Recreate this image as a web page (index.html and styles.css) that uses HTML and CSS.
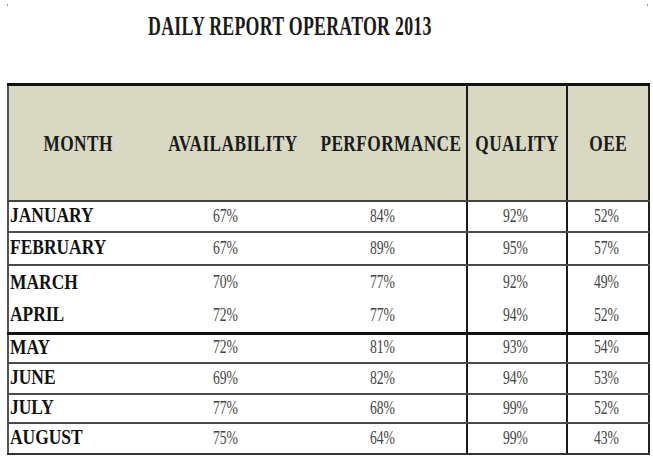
FILE: index.html
```html
<!DOCTYPE html>
<html lang="en">
<head>
<meta charset="utf-8">
<title>Daily Report Operator 2013</title>
<link rel="stylesheet" href="styles.css">
</head>
<body>
<div class="page">
  <div class="specks"><span class="speck"></span><span class="speck"></span></div>
  <h1 class="title"><span class="sq">DAILY REPORT OPERATOR 2013</span></h1>
  <table class="report">
    <colgroup>
      <col class="c-month"><col class="c-avail"><col class="c-perf"><col class="c-qual"><col class="c-oee">
    </colgroup>
    <thead>
      <tr>
        <th><span class="hq">MONTH</span></th>
        <th><span class="hq">AVAILABILITY</span></th>
        <th class="perf"><span class="hq">PERFORMANCE</span></th>
        <th class="vl"><span class="hq">QUALITY</span></th>
        <th class="vl"><span class="hq">OEE</span></th>
      </tr>
    </thead>
    <tbody>
      <tr class="r31"><td class="m"><span class="mq">JANUARY</span></td><td class="a"><span class="nq">67%</span></td><td class="p"><span class="nq">84%</span></td><td class="vl"><span class="nq">92%</span></td><td class="vl"><span class="nq">52%</span></td></tr>
      <tr class="r33"><td class="m"><span class="mq">FEBRUARY</span></td><td class="a"><span class="nq">67%</span></td><td class="p"><span class="nq">89%</span></td><td class="vl"><span class="nq">95%</span></td><td class="vl"><span class="nq">57%</span></td></tr>
      <tr class="noline"><td class="m"><span class="mq">MARCH</span></td><td class="a"><span class="nq">70%</span></td><td class="p"><span class="nq">77%</span></td><td class="vl"><span class="nq">92%</span></td><td class="vl"><span class="nq">49%</span></td></tr>
      <tr class="thick"><td class="m"><span class="mq">APRIL</span></td><td class="a"><span class="nq">72%</span></td><td class="p"><span class="nq">77%</span></td><td class="vl"><span class="nq">94%</span></td><td class="vl"><span class="nq">52%</span></td></tr>
      <tr class="r30"><td class="m"><span class="mq">MAY</span></td><td class="a"><span class="nq">72%</span></td><td class="p"><span class="nq">81%</span></td><td class="vl"><span class="nq">93%</span></td><td class="vl"><span class="nq">54%</span></td></tr>
      <tr class="r31"><td class="m"><span class="mq">JUNE</span></td><td class="a"><span class="nq">69%</span></td><td class="p"><span class="nq">82%</span></td><td class="vl"><span class="nq">94%</span></td><td class="vl"><span class="nq">53%</span></td></tr>
      <tr class="r29"><td class="m"><span class="mq">JULY</span></td><td class="a"><span class="nq">77%</span></td><td class="p"><span class="nq">68%</span></td><td class="vl"><span class="nq">99%</span></td><td class="vl"><span class="nq">52%</span></td></tr>
      <tr class="r31 last"><td class="m"><span class="mq">AUGUST</span></td><td class="a"><span class="nq">75%</span></td><td class="p"><span class="nq">64%</span></td><td class="vl"><span class="nq">99%</span></td><td class="vl"><span class="nq">43%</span></td></tr>
    </tbody>
  </table>
</div>
</body>
</html>
```
FILE: styles.css
```css
html, body {
  margin: 0;
  padding: 0;
  background: #ffffff;
}

.page {
  width: 653px;
  height: 466px;
  overflow: hidden;
  font-family: "Liberation Serif", "Times New Roman", serif;
  color: #111;
}

.specks {
  display: flex;
  justify-content: space-between;
  padding: 4px 5px 0 7px;
  height: 2px;
}

.speck {
  width: 1px;
  height: 2px;
  background: #9a9a9a;
}

.title {
  margin: 0;
  height: 77px;
  padding-left: 148px;
  padding-top: 7px;
  box-sizing: border-box;
  font-size: 27px;
  font-weight: bold;
  line-height: 1;
  color: #1a1a1a;
}

.sq {
  display: inline-block;
  transform: scaleX(0.66);
  transform-origin: left center;
  white-space: nowrap;
  letter-spacing: 0.4px;
}

.report {
  margin-left: 7px;
  width: 641px;
  border-collapse: collapse;
  table-layout: fixed;
  border-top: 3px solid #111;
  border-left: 2px solid #555;
  border-right: 2px solid #222;
}

.c-month { width: 139px; }
.c-avail { width: 172px; }
.c-perf  { width: 148px; }
.c-qual  { width: 100px; }
.c-oee   { width: 82px; }

.report th {
  background: #d9d8c2;
  height: 114px;
  padding: 0;
  font-size: 24px;
  font-weight: bold;
  text-align: center;
  vertical-align: middle;
  white-space: nowrap;
  border-bottom: 2px solid #444;
  color: #1a1a1a;
}

.report th.perf { padding-right: 4px; }

.hq {
  display: inline-block;
  margin: 0 -40px;
  transform: scaleX(0.72);
  transform-origin: center;
  letter-spacing: 0.6px;
}

.report .vl {
  border-left: 2px solid #1a1a1a;
}

.report td {
  height: 30px;
  padding: 0 0 2px 0;
  box-sizing: border-box;
  white-space: nowrap;
  border-bottom: 2px solid #4a4a4a;
  vertical-align: middle;
}

.report tr.r33 td { height: 33px; }
.report tr.r31 td { height: 31px; }
.report tr.r30 td { height: 30px; }
.report tr.r29 td { height: 29px; }
.report tr.noline td { border-bottom: none; height: 35px; }
.report tr.thick td { border-bottom: 3px solid #111; height: 33px; }
.report tr.last td { border-bottom: 2px solid #333; }

.report td.m {
  text-align: left;
  padding-left: 1px;
  font-size: 21px;
  font-weight: bold;
  color: #111;
}

.mq {
  display: inline-block;
  transform: scaleX(0.83);
  transform-origin: left center;
}

.report td.a,
.report td.p,
.report td.vl {
  text-align: center;
  font-size: 19px;
  color: #444;
}

.report td.a { padding-right: 16px; }
.report td.p { padding-right: 20px; }
.report td.vl { padding-right: 4px; }

.nq {
  display: inline-block;
  transform: scaleX(0.72);
  transform-origin: center;
}
```
